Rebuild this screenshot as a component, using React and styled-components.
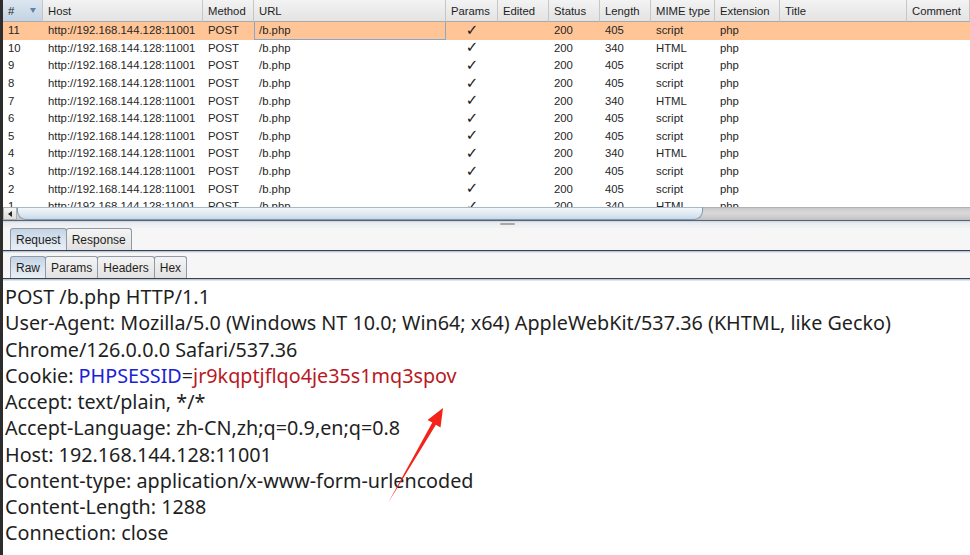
import React from "react";
import styled, { createGlobalStyle } from "styled-components";

const Global = createGlobalStyle`
  html, body { margin: 0; padding: 0; background: #fff; overflow: hidden; }
  * { box-sizing: border-box; }
`;

const COLS = "40px 160px 51px 192px 52px 51px 51px 51px 64px 65px 127px 1fr";

const Frame = styled.div`
  position: relative;
  width: 970px;
  height: 555px;
  border-left: 3px solid #2d2d2d;
  display: flex;
  flex-direction: column;
  background: #fff;
  font-family: "Liberation Sans", Arial, sans-serif;
`;

const TableArea = styled.div`
  height: 207px;
  overflow: hidden;
  display: flex;
  flex-direction: column;
`;

const HeaderRow = styled.div`
  display: grid;
  grid-template-columns: ${COLS};
  height: 22px;
  flex: none;
`;

const HeaderCell = styled.div`
  display: flex;
  align-items: center;
  justify-content: space-between;
  padding: 0 3px 0 5px;
  font-size: 11.3px;
  color: #1e1e1e;
  background: ${(p) =>
    p.$sorted
      ? "linear-gradient(#dce6f0, #c3d3e3)"
      : "linear-gradient(#f3f3f3, #e3e3e3)"};
  border-right: 1px solid #c6c6c6;
  border-bottom: 1px solid #a9a9a9;
  white-space: nowrap;
  overflow: hidden;
`;

const SortArrow = styled.span`
  width: 0;
  height: 0;
  margin-right: 3px;
  border-left: 3.5px solid transparent;
  border-right: 3.5px solid transparent;
  border-top: 5px solid #5e84ae;
`;

const Row = styled.div`
  display: grid;
  grid-template-columns: ${COLS};
  height: 17.6px;
  flex: none;
  background: ${(p) => (p.$selected ? "#ffc597" : "#fff")};
`;

const Cell = styled.div`
  display: flex;
  align-items: center;
  justify-content: ${(p) => (p.$center ? "center" : "flex-start")};
  padding-left: ${(p) => (p.$center ? "0" : "4px")};
  font-size: 11.35px;
  color: #262626;
  white-space: nowrap;
  overflow: hidden;
  border: ${(p) => (p.$focus ? "1px solid #86a8cc" : "1px solid transparent")};
  border-top: none;
`;

const Check = styled.span`
  font-family: "DejaVu Sans", sans-serif;
  font-size: 15px;
  font-weight: bold;
  color: #1a1a1a;
  line-height: 1;
`;

const ScrollBar = styled.div`
  height: 13px;
  display: flex;
  flex: none;
  background: linear-gradient(#9a9a9a 0, #c9c9c9 1px, #d9d9d9 6px, #c6c6c6 12px, #b8b8b8 13px);
`;

const ScrollButton = styled.div`
  width: 14px;
  display: flex;
  align-items: center;
  justify-content: center;
  background: linear-gradient(#f5f5f5, #dcdcdc);
  border: 1px solid #b0b0b0;
`;

const LeftTriangle = styled.span`
  width: 0;
  height: 0;
  border-top: 3px solid transparent;
  border-bottom: 3px solid transparent;
  border-right: 4px solid #222;
`;

const Thumb = styled.div`
  width: 686px;
  background: linear-gradient(#f2f6fa, #dde7f1 60%, #c9d8e7);
  border: 1px solid #7f99b5;
  border-top-color: #a6b8ca;
  border-radius: 0 0 9px 9px;
`;

const Splitter = styled.div`
  height: 8px;
  flex: none;
  border-top: 1px solid #5a6471;
  background: linear-gradient(#c9d4e0 0, #e9edf1 2px, #f4f4f4 8px);
  display: flex;
  align-items: flex-start;
  padding-left: 497px;
`;

const Grip = styled.div`
  width: 15px;
  height: 2px;
  margin-top: 2px;
  background: #a8a8a8;
  border-radius: 1px;
`;

const TabBar = styled.div`
  display: flex;
  align-items: flex-end;
  padding: ${(p) => p.$pad} 0 0 7px;
  background: #f6f6f6;
  border-bottom: 1px solid #3b424d;
  box-shadow: 0 1px 0 #b9c8d8, 0 2px 0 #dfe6ee;
  flex: none;
  position: relative;
  z-index: 1;
`;

const Tab = styled.div`
  height: 22px;
  padding: 0 5px;
  display: flex;
  align-items: center;
  font-size: 12px;
  color: #1e1e1e;
  border: 1px solid #8f9aa6;
  border-bottom: none;
  margin-right: -1px;
  border-radius: 3px 3px 0 0;
  background: ${(p) =>
    p.$active
      ? "linear-gradient(#c3d3e4, #dbe5ef 55%, #e8eef4)"
      : "linear-gradient(#f4f4f4, #e2e2e2)"};
`;

const Gap = styled.div`
  height: 2px;
  flex: none;
`;

const Editor = styled.div`
  position: relative;
  flex: 1;
  padding: 3px 0 0 2px;
  margin-top: 2px;
  font-family: "Noto Sans", "Open Sans", sans-serif;
  font-size: 19.75px;
  line-height: 26.25px;
  color: #1f1f1f;
  background: #fff;
`;

const Line = styled.div`
  white-space: nowrap;
`;

const Key = styled.span`
  color: #1a22d6;
`;

const Val = styled.span`
  color: #b8191f;
`;

const Arrow = styled.svg`
  position: absolute;
  left: -3px;
  top: -281px;
  width: 970px;
  height: 555px;
  pointer-events: none;
`;

const rows = [
  [11, "405", "script", true],
  [10, "340", "HTML"],
  [9, "405", "script"],
  [8, "405", "script"],
  [7, "340", "HTML"],
  [6, "405", "script"],
  [5, "405", "script"],
  [4, "340", "HTML"],
  [3, "405", "script"],
  [2, "405", "script"],
  [1, "340", "HTML"],
];

const headers = ["Host", "Method", "URL", "Params", "Edited", "Status", "Length", "MIME type", "Extension", "Title", "Comment"];

export default function App() {
  return (
    <>
      <Global />
      <Frame>
        <TableArea>
          <HeaderRow>
            <HeaderCell $sorted>
              #<SortArrow />
            </HeaderCell>
            {headers.map((h) => (
              <HeaderCell key={h}>{h}</HeaderCell>
            ))}
          </HeaderRow>
          {rows.map(([n, len, mime, sel]) => (
            <Row key={n} $selected={sel}>
              <Cell>{n}</Cell>
              <Cell>http://192.168.144.128:11001</Cell>
              <Cell>POST</Cell>
              <Cell $focus={sel}>/b.php</Cell>
              <Cell $center>
                <Check>✓</Check>
              </Cell>
              <Cell />
              <Cell>200</Cell>
              <Cell>{len}</Cell>
              <Cell>{mime}</Cell>
              <Cell>php</Cell>
              <Cell />
              <Cell />
            </Row>
          ))}
        </TableArea>
        <ScrollBar>
          <ScrollButton>
            <LeftTriangle />
          </ScrollButton>
          <Thumb />
        </ScrollBar>
        <Splitter>
          <Grip />
        </Splitter>
        <TabBar $pad="0px">
          <Tab $active>Request</Tab>
          <Tab>Response</Tab>
        </TabBar>
        <Gap />
        <TabBar $pad="3px">
          <Tab $active>Raw</Tab>
          <Tab>Params</Tab>
          <Tab>Headers</Tab>
          <Tab>Hex</Tab>
        </TabBar>
        <Editor>
          <Line>POST /b.php HTTP/1.1</Line>
          <Line>User-Agent: Mozilla/5.0 (Windows NT 10.0; Win64; x64) AppleWebKit/537.36 (KHTML, like Gecko)</Line>
          <Line>Chrome/126.0.0.0 Safari/537.36</Line>
          <Line>
            Cookie: <Key>PHPSESSID</Key>=<Val>jr9kqptjflqo4je35s1mq3spov</Val>
          </Line>
          <Line>Accept: text/plain, */*</Line>
          <Line>Accept-Language: zh-CN,zh;q=0.9,en;q=0.8</Line>
          <Line>Host: 192.168.144.128:11001</Line>
          <Line>Content-type: application/x-www-form-urlencoded</Line>
          <Line>Content-Length: 1288</Line>
          <Line>Connection: close</Line>
          <Arrow viewBox="0 0 970 555">
            <polygon
              points="388,503 432.3,422.6 427.5,420 443,408 440.5,427.5 435.9,424.8"
              fill="#f4231a"
            />
          </Arrow>
        </Editor>
      </Frame>
    </>
  );
}
